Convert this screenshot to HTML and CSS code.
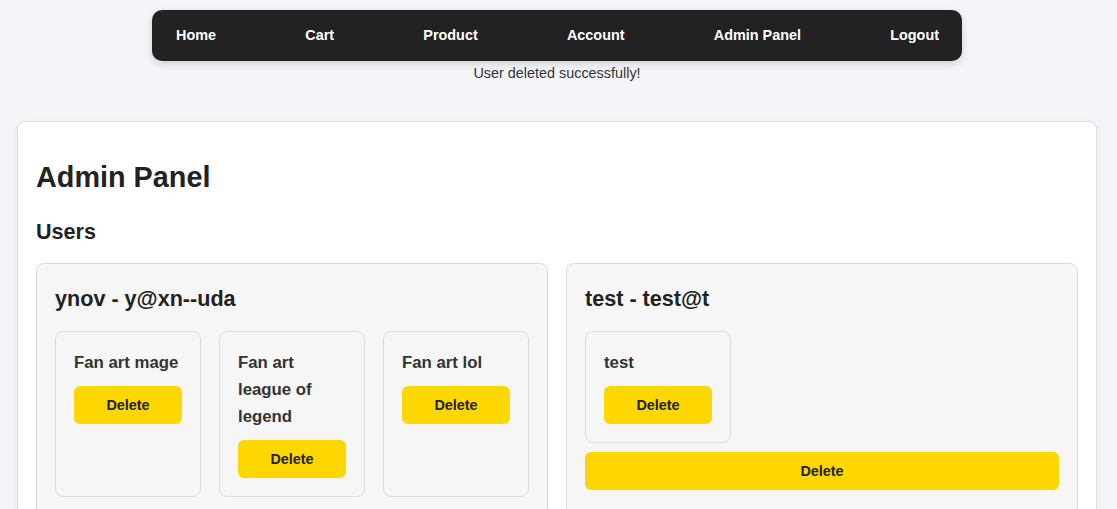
FILE: index.html
```html
<!DOCTYPE html>
<html lang="en">
<head>
<meta charset="utf-8">
<title>Admin Panel</title>
<link rel="stylesheet" href="styles.css">
</head>
<body>
  <nav class="navbar">
    <a class="nav-link" href="#">Home</a>
    <a class="nav-link" href="#">Cart</a>
    <a class="nav-link" href="#">Product</a>
    <a class="nav-link" href="#">Account</a>
    <a class="nav-link" href="#">Admin Panel</a>
    <a class="nav-link" href="#">Logout</a>
  </nav>
  <p class="flash">User deleted successfully!</p>

  <main class="panel">
    <h1 class="panel-title">Admin Panel</h1>
    <h2 class="section-title">Users</h2>
    <div class="users">
      <section class="user-card">
        <h3 class="user-title">ynov - y@xn--uda</h3>
        <div class="products">
          <div class="product-card">
            <h4 class="product-title">Fan art mage</h4>
            <button class="btn">Delete</button>
          </div>
          <div class="product-card">
            <h4 class="product-title">Fan art league of legend</h4>
            <button class="btn">Delete</button>
          </div>
          <div class="product-card">
            <h4 class="product-title">Fan art lol</h4>
            <button class="btn">Delete</button>
          </div>
        </div>
      </section>
      <section class="user-card">
        <h3 class="user-title">test - test@t</h3>
        <div class="products">
          <div class="product-card">
            <h4 class="product-title">test</h4>
            <button class="btn">Delete</button>
          </div>
        </div>
        <button class="btn btn-user">Delete</button>
      </section>
    </div>
  </main>
</body>
</html>
```

FILE: styles.css
```css
* { box-sizing: border-box; }

html, body { height: 100%; }

body {
  margin: 0;
  padding: 10px 20px 0 17px;
  background: #f4f5f9;
  font-family: "Liberation Sans", Arial, sans-serif;
  color: #222;
  overflow: hidden;
}

.navbar {
  width: 810px;
  height: 51px;
  margin: 0 auto;
  padding: 0 23px 2px 24px;
  background: #222;
  border-radius: 10px;
  box-shadow: 0 3px 8px rgba(0, 0, 0, 0.15);
  display: flex;
  align-items: center;
  justify-content: space-between;
}

.nav-link {
  color: #fff;
  text-decoration: none;
  font-weight: bold;
  font-size: 14.4px;
}

.flash {
  margin: 4px 0 0;
  text-align: center;
  font-size: 14.4px;
  line-height: 16px;
  color: #333;
}

.panel {
  margin: 40px 0 0;
  padding: 18px;
  background: #fff;
  border: 1px solid #dedede;
  border-radius: 8px;
  box-shadow: 0 2px 6px rgba(0, 0, 0, 0.06);
}

.panel-title {
  margin: 21px 0 25px;
  font-size: 28.8px;
  line-height: 33px;
  color: #222;
}

.section-title {
  margin: 0 0 19px;
  font-size: 21.6px;
  line-height: 25px;
  color: #222;
}

.users {
  display: grid;
  grid-template-columns: 1fr 1fr;
  gap: 18px;
  align-items: start;
}

.user-card {
  padding: 18px;
  background: #f6f6f6;
  border: 1px solid #dcdcdc;
  border-radius: 8px;
  min-height: 260px;
}

.user-title {
  margin: 4px 0 20px;
  font-size: 21.6px;
  line-height: 25px;
  color: #222;
}

.products {
  display: grid;
  grid-template-columns: repeat(auto-fill, minmax(140px, 1fr));
  gap: 18px;
}

.product-card {
  padding: 17px 18px 18px;
  background: #f6f6f6;
  border: 1px solid #dcdcdc;
  border-radius: 8px;
}

.product-title {
  margin: 0 0 10px;
  font-size: 16.8px;
  line-height: 27px;
  color: #333;
}

.btn {
  display: block;
  width: 100%;
  height: 38px;
  padding: 0;
  border: none;
  border-radius: 6px;
  background: #ffd700;
  color: #222;
  font-family: "Liberation Sans", Arial, sans-serif;
  font-weight: bold;
  font-size: 14.4px;
  cursor: pointer;
}

.btn-user {
  margin-top: 9px;
}
```
